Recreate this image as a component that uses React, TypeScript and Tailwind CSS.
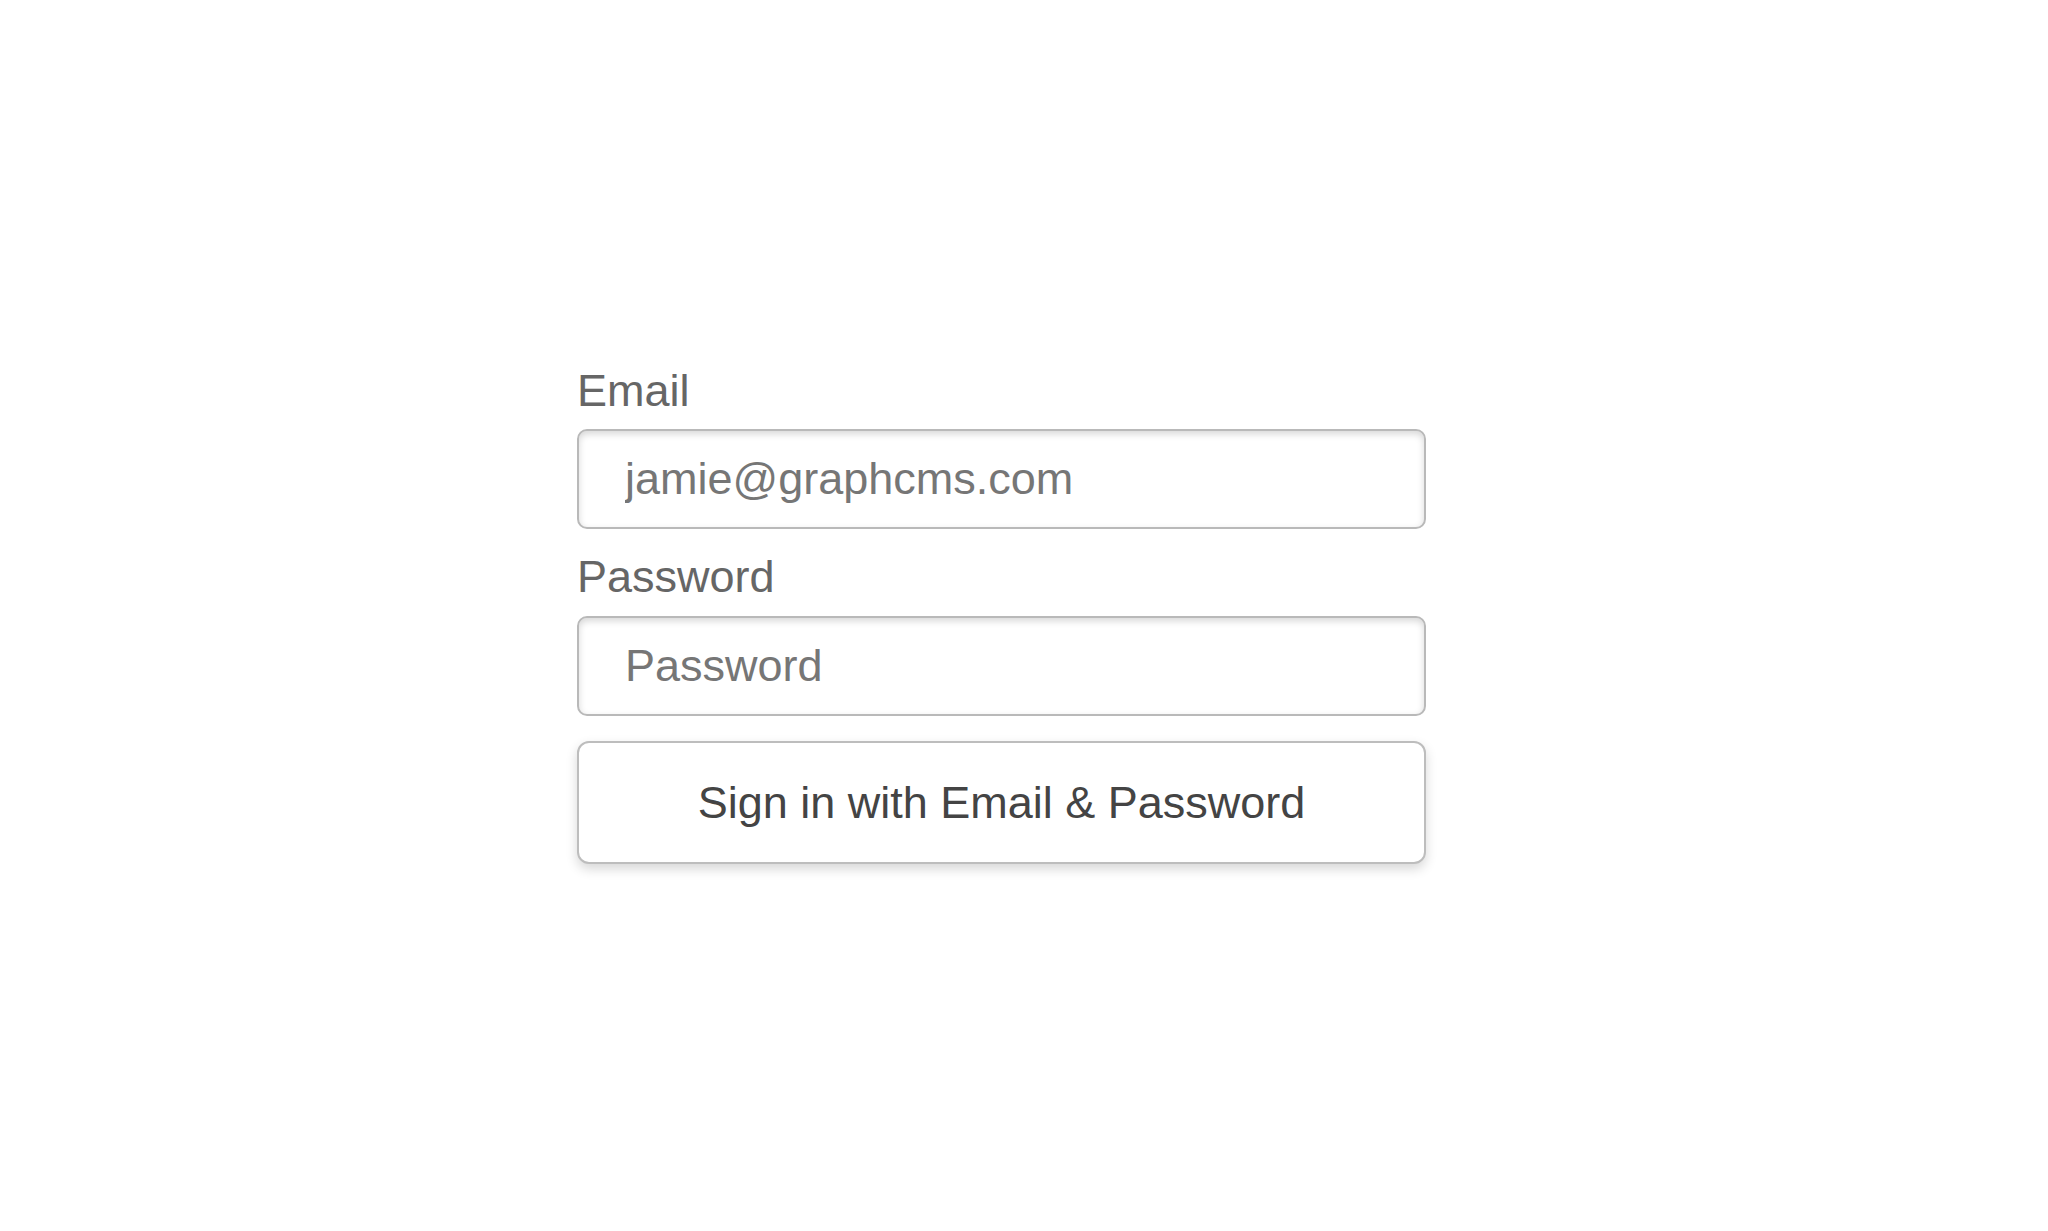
import React from 'react';

const font = { fontFamily: '"Liberation Sans", Arial, Helvetica, sans-serif' };

export default function App() {
  return <div className="min-h-screen bg-white" style={font}>
      <div className="pt-[365px] pl-[577px]">
        <form className="w-[849px] flex flex-col" onSubmit={e => e.preventDefault()}>
          <label htmlFor="email" className="text-[45px] leading-[52px] text-[#666666]">
            Email
          </label>
          <input id="email" type="email" placeholder="jamie@graphcms.com" className="mt-[12px] h-[100px] w-full rounded-[10px] border-2 border-[#b9b9b9] bg-white pl-[46px] text-[45px] text-[#6e6e6e] placeholder:text-[#767676] shadow-[inset_0_3px_7px_rgba(0,0,0,0.16)] outline-none" />
          <label htmlFor="password" className="mt-[22px] text-[45px] leading-[52px] text-[#666666]">
            Password
          </label>
          <input id="password" type="password" placeholder="Password" className="mt-[13px] h-[100px] w-full rounded-[10px] border-2 border-[#b9b9b9] bg-white pl-[46px] text-[45px] text-[#6e6e6e] placeholder:text-[#767676] shadow-[inset_0_3px_7px_rgba(0,0,0,0.16)] outline-none" />
          <button type="submit" className="mt-[25px] h-[123px] w-full rounded-[12px] border-2 border-[#bdbdbd] bg-white text-[45px] text-[#444444] shadow-[0_5px_12px_rgba(0,0,0,0.16)]">
            Sign in with Email &amp; Password
          </button>
        </form>
      </div>
    </div>;
}
